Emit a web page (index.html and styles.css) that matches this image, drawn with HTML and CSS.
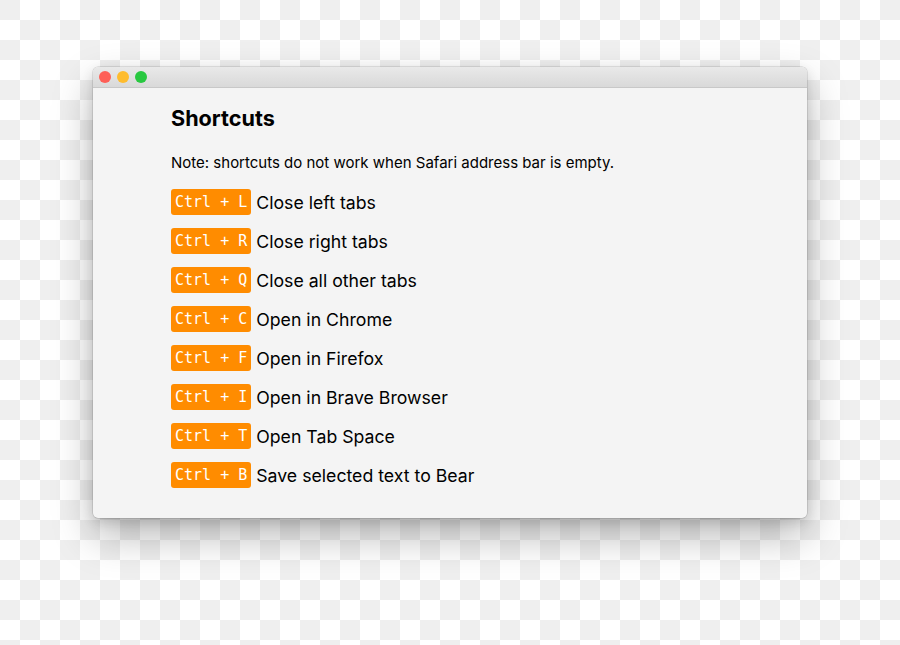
FILE: index.html
```html
<!DOCTYPE html>
<html lang="en">
<head>
<meta charset="utf-8">
<title>Shortcuts</title>
<link rel="stylesheet" href="styles.css">
</head>
<body>
<div class="window">
  <div class="titlebar">
    <span class="light red"></span>
    <span class="light yellow"></span>
    <span class="light green"></span>
  </div>
  <div class="content">
    <h1 class="title">Shortcuts</h1>
    <p class="note">Note: shortcuts do not work when Safari address bar is empty.</p>
    <ul class="list">
      <li class="row"><kbd class="key">Ctrl + L</kbd><span class="label">Close left tabs</span></li>
      <li class="row"><kbd class="key">Ctrl + R</kbd><span class="label">Close right tabs</span></li>
      <li class="row"><kbd class="key">Ctrl + Q</kbd><span class="label">Close all other tabs</span></li>
      <li class="row"><kbd class="key">Ctrl + C</kbd><span class="label">Open in Chrome</span></li>
      <li class="row"><kbd class="key">Ctrl + F</kbd><span class="label">Open in Firefox</span></li>
      <li class="row"><kbd class="key">Ctrl + I</kbd><span class="label">Open in Brave Browser</span></li>
      <li class="row"><kbd class="key">Ctrl + T</kbd><span class="label">Open Tab Space</span></li>
      <li class="row"><kbd class="key">Ctrl + B</kbd><span class="label">Save selected text to Bear</span></li>
    </ul>
  </div>
</div>
</body>
</html>
```

FILE: styles.css
```css
html, body {
  margin: 0;
  padding: 0;
}
body {
  width: 900px;
  height: 645px;
  overflow: hidden;
  font-family: Inter, "Noto Sans", sans-serif;
  background-color: #ffffff;
  background-image: conic-gradient(#ffffff 0 25%, #efefef 0 50%, #ffffff 0 75%, #efefef 0);
  background-size: 40px 40px;
  padding-top: 67px;
  padding-left: 93px;
  box-sizing: border-box;
}
.window {
  width: 714px;
  height: 451px;
  border-radius: 5px;
  background: #f4f4f4;
  box-shadow: 0 0 0 0.5px rgba(0,0,0,0.18), 0 18px 40px rgba(0,0,0,0.28), 0 4px 12px rgba(0,0,0,0.12);
  overflow: hidden;
  display: flex;
  flex-direction: column;
}
.titlebar {
  height: 20px;
  flex: none;
  background: linear-gradient(#e9e9e9, #d9d9d9);
  border-bottom: 1px solid #c8c8c8;
  display: flex;
  align-items: center;
  gap: 6px;
  padding-left: 6px;
}
.light {
  width: 12px;
  height: 12px;
  border-radius: 50%;
  display: block;
}
.red { background: #fe5f57; }
.yellow { background: #febc2e; }
.green { background: #28c840; }
.content {
  padding: 15px 0 0 78px;
  color: #000;
}
.title {
  margin: 0;
  font-size: 21.6px;
  font-weight: 700;
  line-height: 30px;
  color: #000;
}
.note {
  margin: 20px 0 0;
  font-size: 15px;
  line-height: 20px;
}
.list {
  list-style: none;
  margin: 16px 0 0;
  padding: 0;
  display: flex;
  flex-direction: column;
  gap: 13px;
}
.row {
  display: flex;
  align-items: center;
  gap: 5px;
  height: 26px;
}
.key {
  background: #ff8c00;
  color: #fff;
  font-family: "DejaVu Sans Mono", monospace;
  font-size: 15px;
  line-height: 26px;
  height: 26px;
  padding: 0 4px;
  border-radius: 3px;
}
.label {
  font-size: 17.7px;
  color: #000;
}
```
